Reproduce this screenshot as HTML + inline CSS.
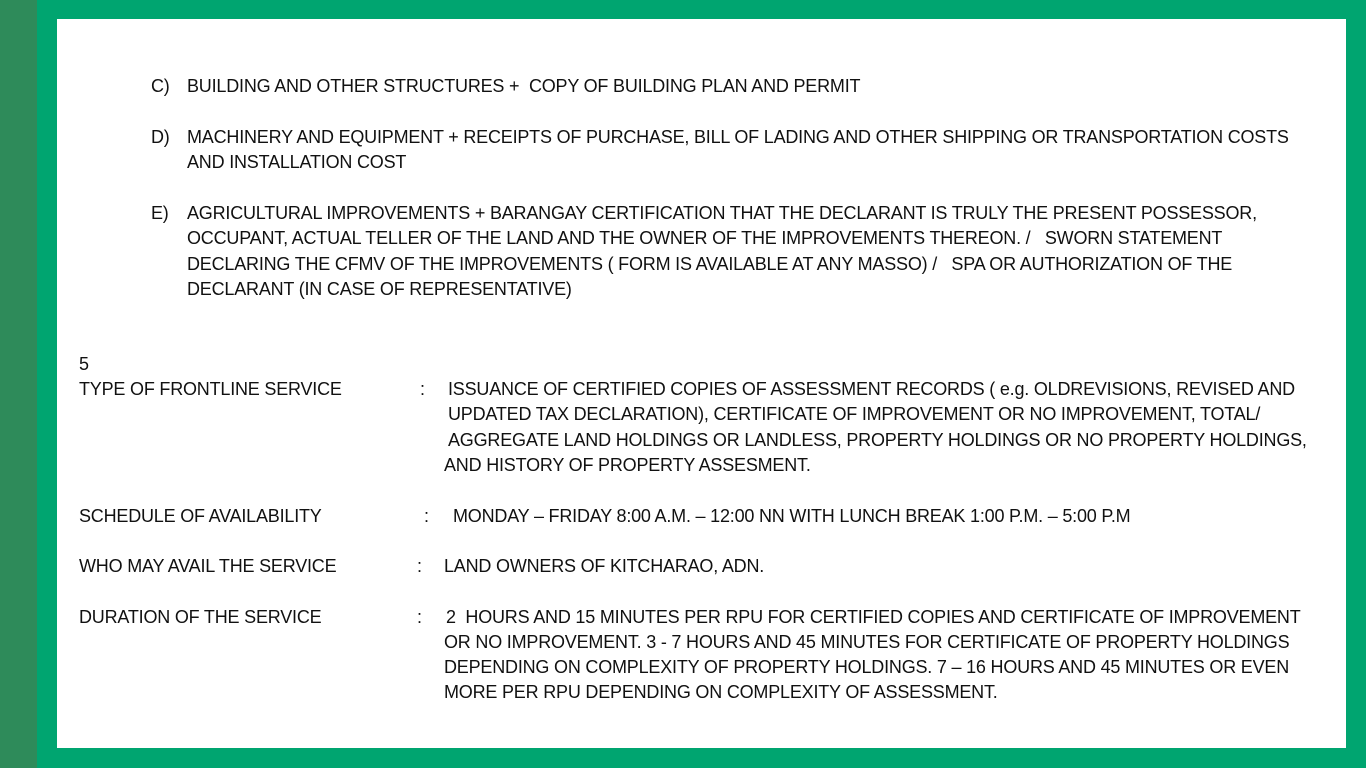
<!DOCTYPE html>
<html><head><meta charset="utf-8"><style>
body{margin:0;width:1366px;height:768px;position:relative;overflow:hidden;background:#00a570;font-family:"Liberation Sans Narrow","Liberation Sans",sans-serif;}
.dk{position:absolute;left:0;top:0;width:37px;height:768px;background:#2e8b5a;}
.wb{position:absolute;left:57px;top:19px;width:1289px;height:729px;background:#fff;}
.t{position:absolute;font-size:18px;color:#111;white-space:nowrap;line-height:20px;letter-spacing:-0.2px;}
</style></head><body>
<div class="dk"></div><div class="wb"></div>
<div class="t" style="left:151px;top:76px">C)</div>
<div class="t" style="left:187px;top:76px">BUILDING AND OTHER STRUCTURES +&nbsp; COPY OF BUILDING PLAN AND PERMIT</div>
<div class="t" style="left:151px;top:127px">D)</div>
<div class="t" style="left:187px;top:127px">MACHINERY AND EQUIPMENT + RECEIPTS OF PURCHASE, BILL OF LADING AND OTHER SHIPPING OR TRANSPORTATION COSTS</div>
<div class="t" style="left:187px;top:152px">AND INSTALLATION COST</div>
<div class="t" style="left:151px;top:203px">E)</div>
<div class="t" style="left:187px;top:203px">AGRICULTURAL IMPROVEMENTS + BARANGAY CERTIFICATION THAT THE DECLARANT IS TRULY THE PRESENT POSSESSOR,</div>
<div class="t" style="left:187px;top:228px">OCCUPANT, ACTUAL TELLER OF THE LAND AND THE OWNER OF THE IMPROVEMENTS THEREON. /&nbsp;&nbsp; SWORN STATEMENT</div>
<div class="t" style="left:187px;top:254px">DECLARING THE CFMV OF THE IMPROVEMENTS ( FORM IS AVAILABLE AT ANY MASSO) /&nbsp;&nbsp; SPA OR AUTHORIZATION OF THE</div>
<div class="t" style="left:187px;top:279px">DECLARANT (IN CASE OF REPRESENTATIVE)</div>
<div class="t" style="left:79px;top:354px">5</div>
<div class="t" style="left:79px;top:379px">TYPE OF FRONTLINE SERVICE</div>
<div class="t" style="left:420px;top:379px">:</div>
<div class="t" style="left:448px;top:379px">ISSUANCE OF CERTIFIED COPIES OF ASSESSMENT RECORDS ( e.g. OLDREVISIONS, REVISED AND</div>
<div class="t" style="left:448px;top:404px">UPDATED TAX DECLARATION), CERTIFICATE OF IMPROVEMENT OR NO IMPROVEMENT, TOTAL/</div>
<div class="t" style="left:448px;top:430px">AGGREGATE LAND HOLDINGS OR LANDLESS, PROPERTY HOLDINGS OR NO PROPERTY HOLDINGS,</div>
<div class="t" style="left:444px;top:455px">AND HISTORY OF PROPERTY ASSESMENT.</div>
<div class="t" style="left:79px;top:506px">SCHEDULE OF AVAILABILITY</div>
<div class="t" style="left:424px;top:506px">:</div>
<div class="t" style="left:453px;top:506px">MONDAY – FRIDAY 8:00 A.M. – 12:00 NN WITH LUNCH BREAK 1:00 P.M. – 5:00 P.M</div>
<div class="t" style="left:79px;top:556px">WHO MAY AVAIL THE SERVICE</div>
<div class="t" style="left:417px;top:556px">:</div>
<div class="t" style="left:444px;top:556px">LAND OWNERS OF KITCHARAO, ADN.</div>
<div class="t" style="left:79px;top:607px">DURATION OF THE SERVICE</div>
<div class="t" style="left:417px;top:607px">:</div>
<div class="t" style="left:446px;top:607px">2&nbsp; HOURS AND 15 MINUTES PER RPU FOR CERTIFIED COPIES AND CERTIFICATE OF IMPROVEMENT</div>
<div class="t" style="left:444px;top:632px">OR NO IMPROVEMENT. 3 - 7 HOURS AND 45 MINUTES FOR CERTIFICATE OF PROPERTY HOLDINGS</div>
<div class="t" style="left:444px;top:657px">DEPENDING ON COMPLEXITY OF PROPERTY HOLDINGS. 7 – 16 HOURS AND 45 MINUTES OR EVEN</div>
<div class="t" style="left:444px;top:682px">MORE PER RPU DEPENDING ON COMPLEXITY OF ASSESSMENT.</div>
</body></html>
